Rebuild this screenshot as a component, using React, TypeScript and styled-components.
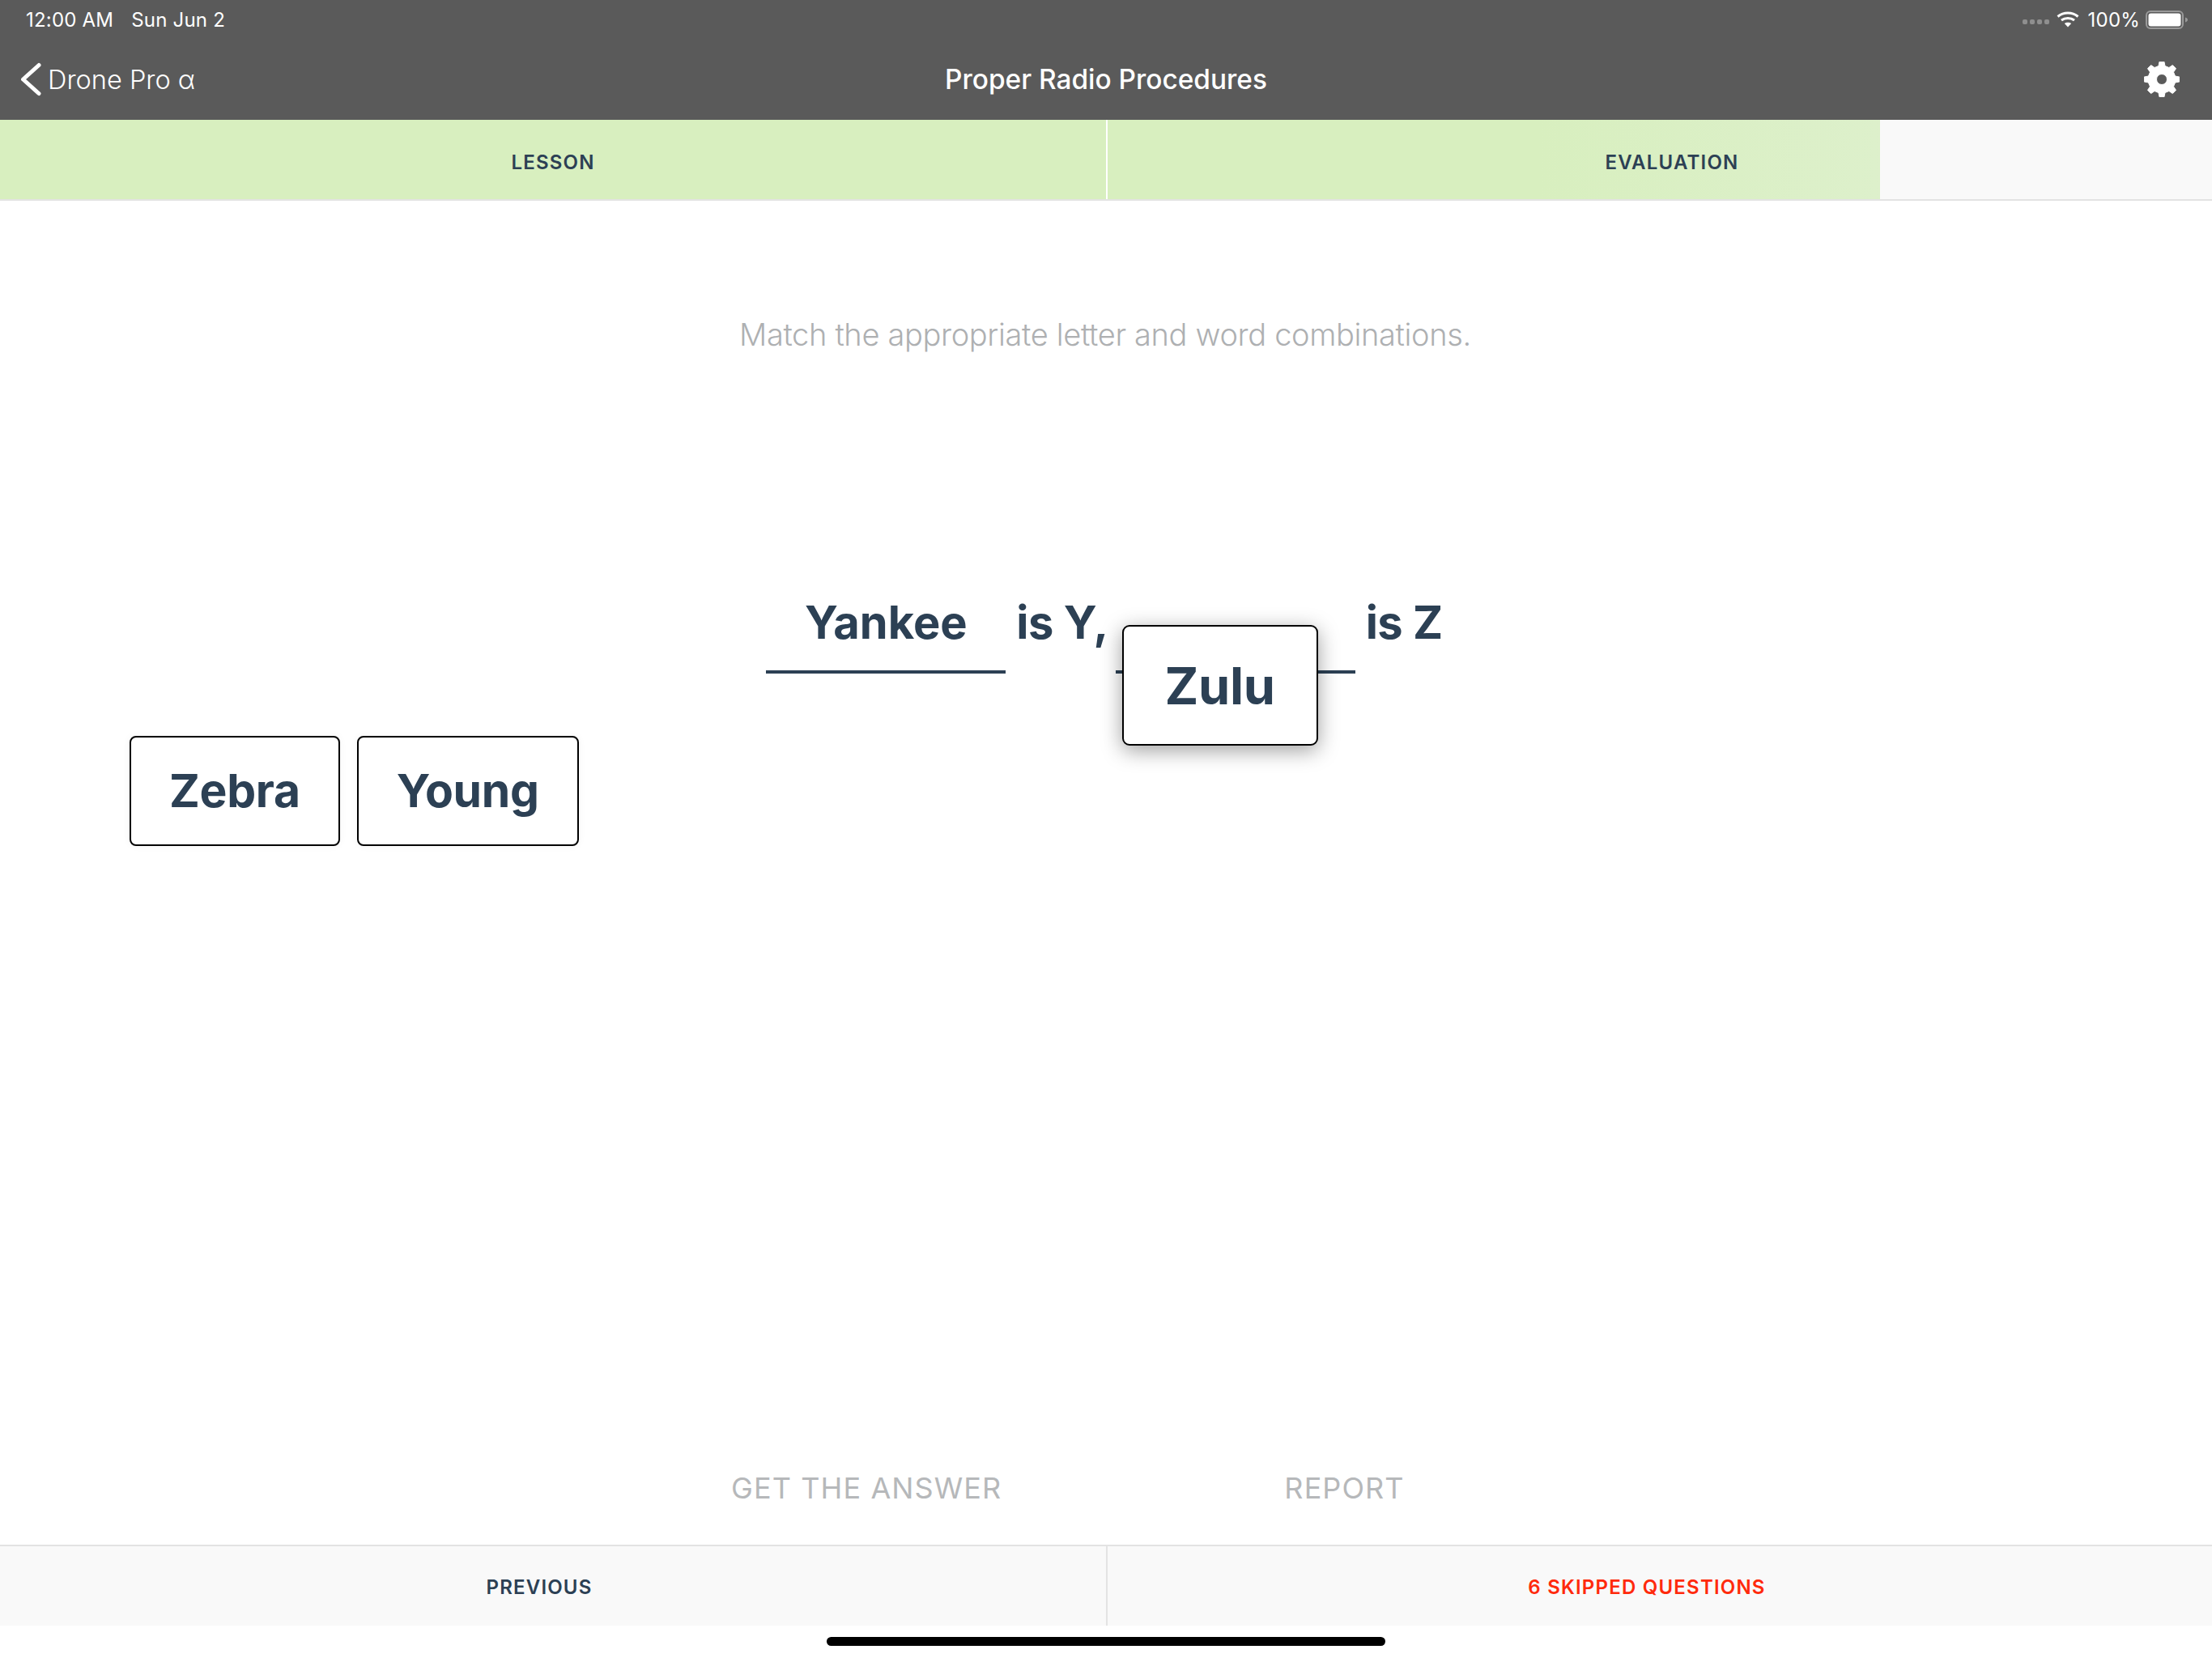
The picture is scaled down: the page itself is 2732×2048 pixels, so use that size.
import styled, { createGlobalStyle } from 'styled-components';

const GlobalStyle = createGlobalStyle`
  html, body {
    margin: 0;
    padding: 0;
    background: #fff;
  }
  body {
    font-family: Inter, "Liberation Sans", sans-serif;
  }
`;

const Page = styled.div`
  display: flex;
  flex-direction: column;
  width: 2732px;
  height: 2048px;
  overflow: hidden;
`;

const Header = styled.header`
  flex: none;
  height: 148px;
  background-color: #5a5a5a;
  color: #fff;
`;

const StatusBar = styled.div`
  display: flex;
  align-items: center;
  justify-content: space-between;
  height: 48px;
  padding: 0 30px 0 32px;
  font-size: 24px;
  letter-spacing: 0.2px;
`;

const StatusLeft = styled.div`
  display: flex;
  gap: 22px;
`;

const StatusRight = styled.div`
  display: flex;
  align-items: center;
`;

const SignalDots = styled.div`
  display: flex;
  gap: 3px;
  margin: 6px 9px 0 0;

  span {
    width: 6px;
    height: 6px;
    border-radius: 2px;
    background-color: #8f8f8f;
  }
`;

const Percent = styled.span`
  margin: 0 7px 0 11px;
`;

const NavBar = styled.div`
  display: grid;
  grid-template-columns: 1fr auto 1fr;
  align-items: center;
  height: 100px;
  padding: 0 40px;
`;

const BackLink = styled.div`
  display: flex;
  align-items: center;
  gap: 8px;
  margin-left: -15px;
  font-size: 32.5px;
  font-weight: 300;
`;

const Title = styled.div`
  font-size: 33.4px;
  font-weight: 500;
`;

const Settings = styled.div`
  display: flex;
  justify-content: flex-end;
`;

const TabBar = styled.div`
  flex: none;
  display: flex;
  height: 98px;
  border-bottom: 2px solid #e3e3e3;
  background: linear-gradient(
    to right,
    #d8efbf 0,
    #d8efbf 1900px,
    #ddf0cb 2322px,
    #f9f9f9 2322px
  );
`;

const BarCell = styled.div<{ $offset?: number; $danger?: boolean }>`
  flex: none;
  width: 50%;
  display: flex;
  align-items: center;
  justify-content: center;
  box-sizing: border-box;
  padding-left: ${(p) => Math.max(p.$offset ?? 0, 0)}px;
  padding-right: ${(p) => Math.max(-(p.$offset ?? 0), 0)}px;
  font-size: 24px;
  font-weight: 600;
  letter-spacing: 1.2px;
  color: ${(p) => (p.$danger ? '#ff2a0c' : '#2c4054')};
`;

const TabCell = styled(BarCell)`
  padding-top: 7px;

  & + & {
    border-left: 2px solid #fff;
  }
`;

const Main = styled.main`
  flex: 1;
  display: flex;
  flex-direction: column;
`;

const Prompt = styled.p`
  margin: 141px 0 0;
  padding-right: 2px;
  text-align: center;
  font-size: 38px;
  line-height: 48px;
  letter-spacing: -0.35px;
  font-weight: 300;
  color: #aeb0b2;
`;

const Sentence = styled.div`
  display: flex;
  align-items: flex-start;
  justify-content: center;
  gap: 11px;
  margin-top: 298px;
  padding-right: 6px;
  font-size: 56px;
  line-height: 68px;
  font-weight: 700;
  color: #2c4054;
`;

const Blank = styled.div`
  position: relative;
  box-sizing: border-box;
  width: 296px;
  height: 97px;
  border-bottom: 4px solid #2c4054;
  text-align: center;
`;

const Phrase = styled.span`
  margin: 0 -2px 0 2px;
  letter-spacing: -0.5px;
  white-space: nowrap;
`;

const WordBank = styled.div`
  display: flex;
  gap: 21px;
  margin-top: 77px;
  padding-left: 160px;
`;

const WordCard = styled.div`
  box-sizing: border-box;
  display: flex;
  align-items: center;
  justify-content: center;
  height: 136px;
  padding: 0 47px;
  border: 2px solid #000;
  border-radius: 8px;
  background-color: #fff;
  box-shadow: 0 0 10px rgba(0, 0, 0, 0.05);
  font-size: 57px;
  line-height: 68px;
  letter-spacing: -0.3px;
  font-weight: 700;
  color: #2c4054;
`;

const DraggedCard = styled(WordCard)`
  position: absolute;
  top: 37px;
  left: 8px;
  width: 242px;
  height: 149px;
  padding: 0;
  border-width: 2.5px;
  border-radius: 9px;
  box-shadow: 0 6px 26px rgba(0, 0, 0, 0.38);
  font-size: 63px;
`;

const Actions = styled.div`
  display: flex;
  gap: 349px;
  margin-top: auto;
  padding: 0 0 48px 903px;
  font-size: 36px;
  line-height: 44px;
  letter-spacing: 1.1px;
  color: #b6b8ba;
`;

const BottomBar = styled.div`
  flex: none;
  display: flex;
  height: 98px;
  border-top: 2px solid #e3e3e3;
  background-color: #f9f9f9;
`;

const BottomCell = styled(BarCell)`
  padding-top: 2px;

  & + & {
    border-left: 2px solid #e3e3e3;
  }
`;

const HomeRow = styled.div`
  flex: none;
  display: flex;
  justify-content: center;
  height: 40px;
  padding-top: 14px;
  box-sizing: border-box;
`;

const HomeIndicator = styled.div`
  width: 690px;
  height: 11px;
  border-radius: 6px;
  background-color: #000;
`;

function gearPath(teeth: number, outer: number, root: number, hole: number) {
  const c = 22;
  const step = (Math.PI * 2) / teeth;
  const pts: string[] = [];
  for (let i = 0; i < teeth; i++) {
    const a = -Math.PI / 2 + i * step;
    const at = (r: number, d: number) =>
      `${(c + r * Math.cos(a + d)).toFixed(2)} ${(c + r * Math.sin(a + d)).toFixed(2)}`;
    pts.push(at(root, -step * 0.3), at(outer, -step * 0.17), at(outer, step * 0.17), at(root, step * 0.3));
  }
  return `M${pts.join('L')}Z M${c - hole} ${c}a${hole} ${hole} 0 1 0 ${hole * 2} 0a${hole} ${hole} 0 1 0 ${-hole * 2} 0Z`;
}

function GearIcon() {
  return (
    <svg width="44" height="44" viewBox="0 0 44 44">
      <path d={gearPath(8, 22, 17, 6.5)} fill="#fff" fillRule="evenodd" stroke="#fff" strokeWidth="1" strokeLinejoin="round" />
    </svg>
  );
}

function WifiIcon() {
  return (
    <svg width="28" height="20" viewBox="0 0 28 20" fill="none" stroke="#fff" strokeWidth="3">
      <path d="M1.5 6.5C8.5 0.5 19.5 0.5 26.5 6.5" />
      <path d="M6 11C10.5 7.5 17.5 7.5 22 11" />
      <path d="M14 19.5L9.8 15C12 13.2 16 13.2 18.2 15Z" fill="#fff" stroke="none" />
    </svg>
  );
}

function BatteryIcon() {
  return (
    <svg width="52" height="23" viewBox="0 0 52 23">
      <rect x="1" y="1" width="45" height="21" rx="5" fill="none" stroke="#9a9a9a" strokeWidth="2" />
      <rect x="3.5" y="3.5" width="40" height="16" rx="3" fill="#fff" />
      <path d="M49 8.500c1.600.4 3 1.600 3 3s-1.400 2.600-3 3z" fill="#9a9a9a" />
    </svg>
  );
}

function BackChevron() {
  return (
    <svg width="26" height="42" viewBox="0 0 26 42" fill="none" stroke="#fff" strokeWidth="5" strokeLinecap="round" strokeLinejoin="round">
      <path d="M23 3.500L3.500 21L23 38.500" />
    </svg>
  );
}

export default function App() {
  return (
    <Page>
      <GlobalStyle />
      <Header>
        <StatusBar>
          <StatusLeft>
            <span>12:00 AM</span>
            <span>Sun Jun 2</span>
          </StatusLeft>
          <StatusRight>
            <SignalDots>
              <span />
              <span />
              <span />
              <span />
            </SignalDots>
            <WifiIcon />
            <Percent>100%</Percent>
            <BatteryIcon />
          </StatusRight>
        </StatusBar>
        <NavBar>
          <BackLink>
            <BackChevron />
            Drone Pro α
          </BackLink>
          <Title>Proper Radio Procedures</Title>
          <Settings>
            <GearIcon />
          </Settings>
        </NavBar>
      </Header>
      <TabBar>
        <TabCell>LESSON</TabCell>
        <TabCell $offset={30}>EVALUATION</TabCell>
      </TabBar>
      <Main>
        <Prompt>Match the appropriate letter and word combinations.</Prompt>
        <Sentence>
          <Blank>Yankee</Blank>
          <Phrase>is Y,</Phrase>
          <Blank>
            <DraggedCard>Zulu</DraggedCard>
          </Blank>
          <Phrase>is Z</Phrase>
        </Sentence>
        <WordBank>
          <WordCard>Zebra</WordCard>
          <WordCard>Young</WordCard>
        </WordBank>
        <Actions>
          <span>GET THE ANSWER</span>
          <span>REPORT</span>
        </Actions>
      </Main>
      <BottomBar>
        <BottomCell $offset={-34}>PREVIOUS</BottomCell>
        <BottomCell $offset={-32} $danger>
          6 SKIPPED QUESTIONS
        </BottomCell>
      </BottomBar>
      <HomeRow>
        <HomeIndicator />
      </HomeRow>
    </Page>
  );
}
